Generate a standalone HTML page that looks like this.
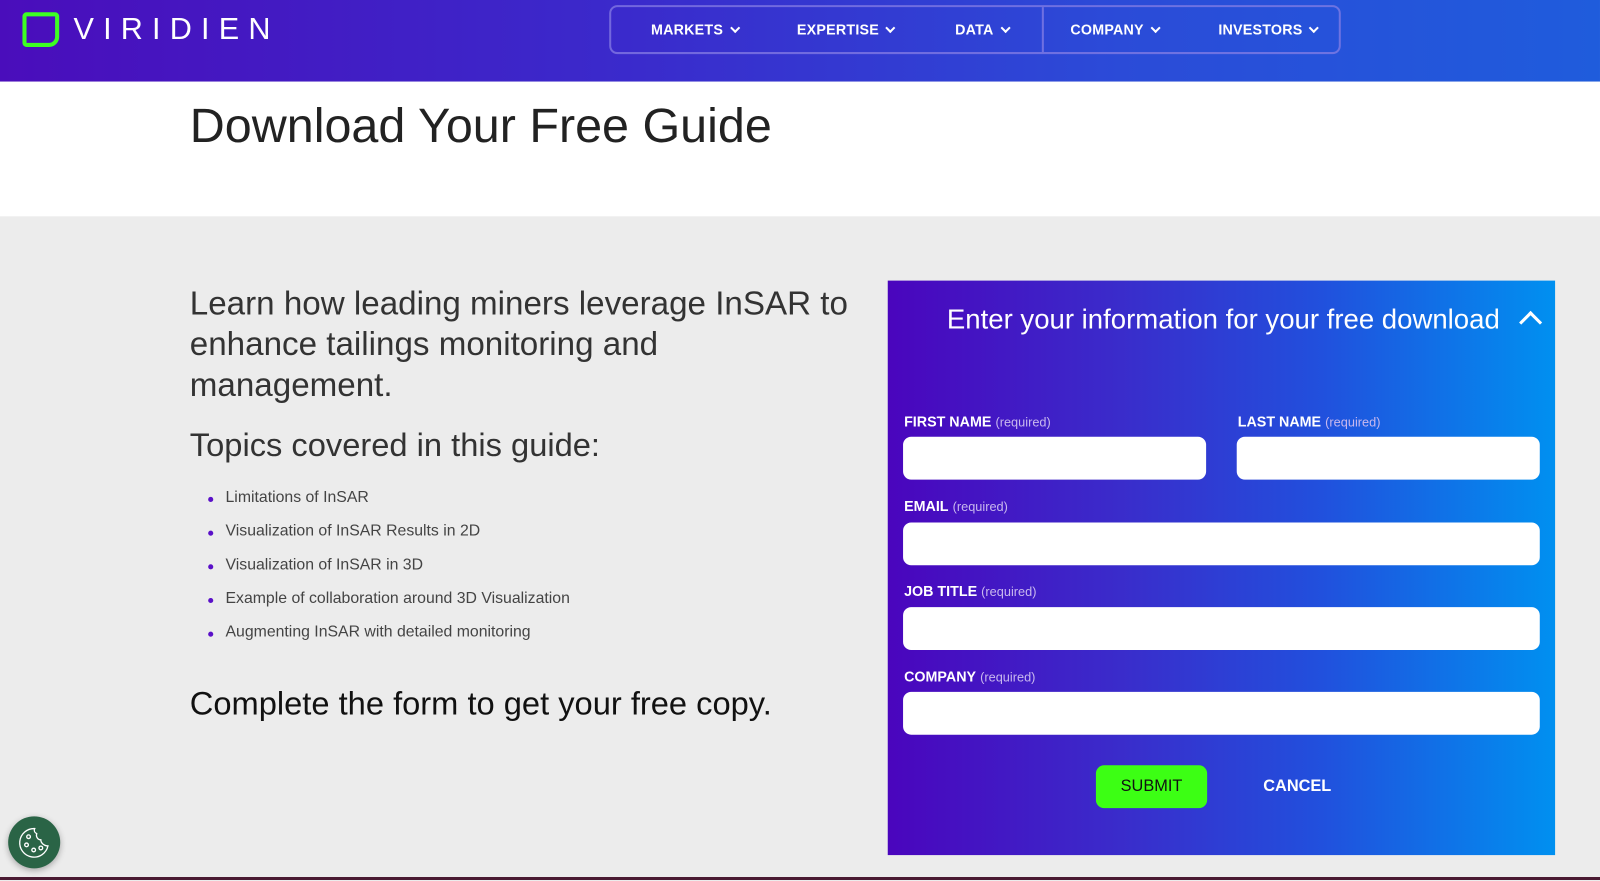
<!DOCTYPE html>
<html><head><meta charset="utf-8"><style>
*{box-sizing:border-box;margin:0;padding:0}
body{width:1600px;height:880px;overflow:hidden;background:#ececec;font-family:"Liberation Sans",sans-serif;position:relative}
#w{position:absolute;left:0;top:0;width:1568px;height:863px;transform:scale(1.0204);transform-origin:0 0}
.hdr{position:absolute;left:0;top:0;width:1568px;height:80px;background:linear-gradient(90deg,#4a0dbb 0%,#3a2bcc 40%,#2b4bd8 70%,#1f5cdc 100%)}
.logo{position:absolute;left:22px;top:12px;width:36px;height:34px;border:4px solid #3dff22;border-radius:4px 4px 10px 4px}
.brand{position:absolute;left:72px;top:12px;color:#fff;font-size:30px;letter-spacing:9px;font-weight:normal}
.nav{position:absolute;left:597px;top:5px;width:717px;height:48px;border:2px solid rgba(140,130,230,.7);border-radius:8px}
.nav .sep{position:absolute;left:422px;top:0;width:2px;height:44px;background:rgba(140,130,230,.7)}
.nav span{position:absolute;top:14px;color:#fff;font-size:14px;font-weight:bold;letter-spacing:.2px}
.nav span i{display:inline-block;width:7px;height:7px;border-right:2px solid #fff;border-bottom:2px solid #fff;transform:rotate(45deg);margin-left:8px;position:relative;top:-3px}
.white{position:absolute;left:0;top:80px;width:1568px;height:132px;background:#fff}
h1{position:absolute;left:186px;top:96px;font-size:47.5px;font-weight:normal;color:#222}
.lead{position:absolute;left:186px;top:277px;white-space:nowrap;font-size:32.5px;line-height:40px;color:#333;font-weight:normal}
.topics{position:absolute;left:186px;top:418px;font-size:32px;color:#333}
ul{position:absolute;left:204px;top:479px;list-style:none}
li{font-size:15.5px;color:#444;height:33px;padding-left:17px;position:relative}
li:before{content:"";position:absolute;left:0;top:8px;width:5px;height:5px;border-radius:50%;background:#5a10c8}
.cta{position:absolute;left:186px;top:671px;font-size:32px;color:#111}
.form{position:absolute;left:870px;top:275px;width:654px;height:563px;background:linear-gradient(90deg,#4a05bd 0%,#3a2ccb 35%,#2150dd 65%,#0090f0 100%)}
.ft{position:absolute;left:58px;top:23px;color:#fff;font-size:27px}
.car{position:absolute;left:622px;top:33px;width:16px;height:16px;border-left:3px solid #fff;border-top:3px solid #fff;transform:rotate(45deg)}
.lb{position:absolute;color:#fff;font-size:14px;font-weight:bold}
.lb em{font-style:normal;font-weight:normal;font-size:12.5px;color:#c8b8ee;margin-left:4px}
.in{position:absolute;background:#fff;border-radius:8px;height:42px}
.sub{position:absolute;left:204px;top:475px;width:109px;height:42px;background:#3cff14;border-radius:8px;color:#111;font-size:16px;text-align:center;line-height:42px}
.can{position:absolute;left:368px;top:487px;color:#fff;font-size:16px;font-weight:bold}
.cookie{position:absolute;left:8px;top:800px;width:51px;height:51px;border-radius:50%;background:#2a6446;box-shadow:0 2px 6px rgba(0,0,0,.3)}
.bot{position:absolute;left:0;top:877px;width:1600px;height:3px;background:#4a1a32}
</style></head><body>
<div id="w">
<div class="hdr">
<div class="logo"></div>
<div class="brand">VIRIDIEN</div>
<div class="nav"><div class="sep"></div>
<span style="left:39px">MARKETS<i></i></span>
<span style="left:182px">EXPERTISE<i></i></span>
<span style="left:337px">DATA<i></i></span>
<span style="left:450px">COMPANY<i></i></span>
<span style="left:595px">INVESTORS<i></i></span>
</div></div>
<div class="white"></div>
<h1>Download Your Free Guide</h1>
<div class="lead">Learn how leading miners leverage InSAR to<br>enhance tailings monitoring and<br>management.</div>
<div class="topics">Topics covered in this guide:</div>
<ul><li>Limitations of InSAR</li><li>Visualization of InSAR Results in 2D</li><li>Visualization of InSAR in 3D</li><li>Example of collaboration around 3D Visualization</li><li>Augmenting InSAR with detailed monitoring</li></ul>
<div class="cta">Complete the form to get your free copy.</div>
<div class="form">
<div class="ft">Enter your information for your free download</div>
<div class="car"></div>
<div class="lb" style="left:16px;top:130px">FIRST NAME<em>(required)</em></div>
<div class="lb" style="left:343px;top:130px">LAST NAME<em>(required)</em></div>
<div class="in" style="left:15px;top:153px;width:297px"></div>
<div class="in" style="left:342px;top:153px;width:297px"></div>
<div class="lb" style="left:16px;top:213px">EMAIL<em>(required)</em></div>
<div class="in" style="left:15px;top:237px;width:624px"></div>
<div class="lb" style="left:16px;top:296px">JOB TITLE<em>(required)</em></div>
<div class="in" style="left:15px;top:320px;width:624px"></div>
<div class="lb" style="left:16px;top:380px">COMPANY<em>(required)</em></div>
<div class="in" style="left:15px;top:403px;width:624px"></div>
<div class="sub">SUBMIT</div>
<div class="can">CANCEL</div>
</div>
<div class="cookie"><svg width="51" height="51" viewBox="0 0 51 51" fill="none" stroke="#fff" stroke-width="1.3"><path d="M26 12a14 14 0 1 0 13 17c-4 0-7-3-7-6-3 0-5-3-4-6-2-1-3-3-2-5z"/><circle cx="20" cy="20" r="1.8"/><circle cx="18" cy="28" r="1.8"/><circle cx="25" cy="33" r="1.8"/><circle cx="32" cy="31" r="1.8"/></svg></div>
</div>
<div class="bot"></div>
</body></html>
